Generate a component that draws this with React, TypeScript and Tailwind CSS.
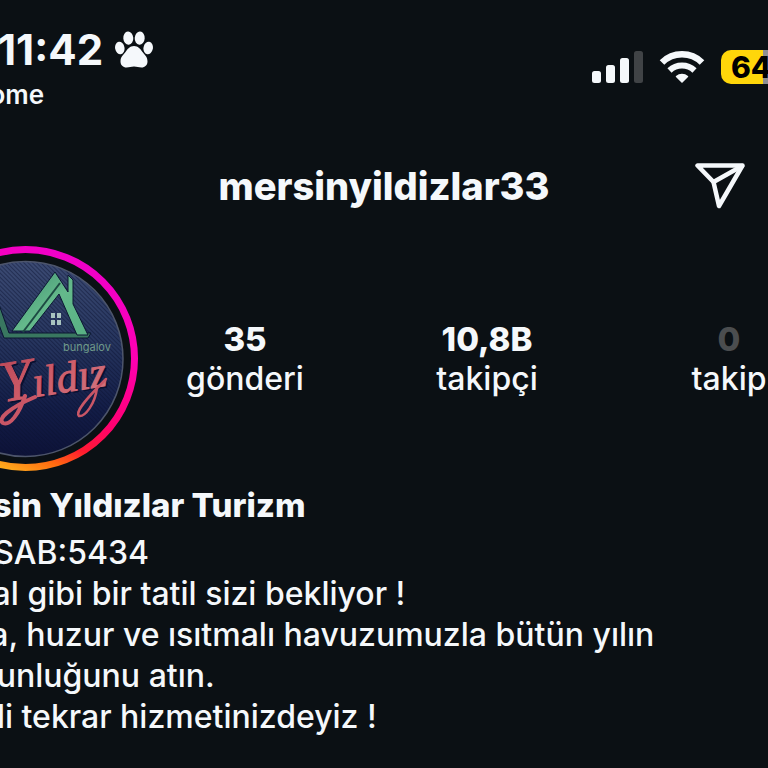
import type { ReactNode } from "react";

const STATS = [
  { value: "35", label: "gönderi", muted: false },
  { value: "10,8B", label: "takipçi", muted: false },
  { value: "0", label: "takip", muted: true },
];

const BIO = [
  "TÜRSAB:5434",
  "Masal gibi bir tatil sizi bekliyor !",
  "Doğa, huzur ve ısıtmalı havuzumuzla bütün yılın",
  "yorgunluğunu atın.",
  "Şimdi tekrar hizmetinizdeyiz !",
];

function PawIcon() {
  return (
    <svg width="38" height="38" viewBox="0 0 38 38" fill="currentColor" aria-hidden="true">
      <ellipse cx="4.8" cy="17" rx="4.7" ry="6.3" transform="rotate(-10 4.8 17)" />
      <ellipse cx="13.3" cy="7.2" rx="5" ry="6.600" transform="rotate(-4 13.3 7.2)" />
      <ellipse cx="24.7" cy="7.2" rx="5" ry="6.600" transform="rotate(4 24.7 7.2)" />
      <ellipse cx="33.2" cy="17" rx="4.7" ry="6.3" transform="rotate(10 33.2 17)" />
      <path d="M19 15c-4 0-6.500 3-8.500 6-2 3-5 4.500-5 9.500 0 3.500 2.600 6 6 6 3 0 4.500-1 7.500-1s4.500 1 7.500 1c3.400 0 6-2.500 6-6 0-5-3-6.500-5-9.500-2-3-4.500-6-8.500-6z" />
    </svg>
  );
}

function SignalIcon() {
  return (
    <svg width="51" height="33" viewBox="0 0 51 33" fill="currentColor" aria-label="Signal">
      <rect x="0" y="20" width="9" height="12" rx="2.5" />
      <rect x="14" y="14" width="9" height="18" rx="2.5" />
      <rect x="28" y="7" width="9" height="25" rx="2.5" />
      <rect x="42" y="0" width="9" height="32" rx="2.5" fill="#404346" />
    </svg>
  );
}

function WifiIcon() {
  return (
    <svg width="46" height="33" viewBox="0 0 46 33" fill="none" stroke="currentColor" aria-label="Wi-Fi">
      <path d="M3 11.500a28.500 28.500 0 0 1 40 0" strokeWidth="6.500" />
      <path d="M10.500 19.500a18 18 0 0 1 25 0" strokeWidth="6" />
      <path
        d="M17.500 25.500a8.500 8.500 0 0 1 11 0l-5.500 5.500z"
        fill="currentColor"
        strokeWidth="1.500"
        strokeLinejoin="round"
      />
    </svg>
  );
}

function SendIcon() {
  return (
    <svg
      width="50"
      height="48"
      viewBox="0 0 50 48"
      fill="none"
      stroke="currentColor"
      strokeWidth="4.500"
      strokeLinejoin="round"
      strokeLinecap="round"
      aria-hidden="true"
    >
      <path d="M2.500 3.500H47.500L24 44 18.500 20z" />
      <path d="M18.500 20L47 4" />
    </svg>
  );
}

/** Story ring with the bungalow logo inside. */
function Avatar() {
  return (
    <svg width="225" height="225" viewBox="0 0 225 225" className="block" role="img" aria-label="Yıldız bungalov">
      <defs>
        <linearGradient id="ring" gradientUnits="userSpaceOnUse" x1="190" y1="15" x2="100" y2="225">
          <stop offset="0" stopColor="#ee00cc" />
          <stop offset="0.35" stopColor="#ff00b0" />
          <stop offset="0.65" stopColor="#ff0070" />
          <stop offset="0.8" stopColor="#ff1a30" />
          <stop offset="0.9" stopColor="#ff6a10" />
          <stop offset="1" stopColor="#ffa81c" />
        </linearGradient>
        <linearGradient id="disc" x1="0" y1="0" x2="0" y2="1">
          <stop offset="0" stopColor="#3b4a72" />
          <stop offset="0.4" stopColor="#27365f" />
          <stop offset="0.75" stopColor="#131d47" />
          <stop offset="1" stopColor="#0d1238" />
        </linearGradient>
        <linearGradient id="roof" x1="0" y1="0" x2="1" y2="1">
          <stop offset="0" stopColor="#3f8f70" />
          <stop offset="0.5" stopColor="#64b98b" />
          <stop offset="1" stopColor="#58b084" />
        </linearGradient>
        <linearGradient id="script" x1="0" y1="0" x2="1" y2="1">
          <stop offset="0" stopColor="#b84555" />
          <stop offset="0.5" stopColor="#cf5c69" />
          <stop offset="1" stopColor="#cf7883" />
        </linearGradient>
        <pattern id="weave" width="3" height="3" patternUnits="userSpaceOnUse" patternTransform="rotate(-45)">
          <rect width="1" height="3" fill="#0a1230" opacity="0.45" />
        </pattern>
      </defs>
      <circle cx="112.500" cy="112.500" r="109" fill="none" stroke="url(#ring)" strokeWidth="7" />
      <circle cx="112.500" cy="113" r="97.500" fill="url(#disc)" />
      <circle cx="112.500" cy="113" r="97.500" fill="url(#weave)" stroke="#4d556b" strokeWidth="1.500" />

      <g stroke="#0c1733" strokeWidth="1">
        <path d="M82 47L96 87H178L175 92H91L76 52z" fill="#397760" />
        <path d="M142 26L99 85H117L146 48 164 89H175L160 58V34L155 29V46z" fill="url(#roof)" />
      </g>
      <path d="M147 37L110 86" stroke="#1d4a43" strokeWidth="2" />
      <g fill="#a9c4c0">
        <rect x="138" y="67" width="4" height="5" />
        <rect x="144" y="67" width="4" height="5" />
        <rect x="138" y="74" width="4" height="5" />
        <rect x="144" y="74" width="4" height="5" />
      </g>
      <text x="150" y="105" fontSize="11" fontFamily="Inter, sans-serif" fill="#6f9a8a">
        bungalov
      </text>
      <g transform="rotate(-9 90 150)" fontFamily="'Liberation Serif', serif" fontStyle="italic" fontSize="43">
        <text x="91" y="158" fill="#0a1030">
          <tspan fontSize="58">Y</tspan>ıldız
        </text>
        <text x="89" y="156" fill="url(#script)" stroke="url(#script)" strokeWidth="1">
          <tspan fontSize="58">Y</tspan>ıldız
        </text>
      </g>
      <g fill="none" stroke="#c95666" strokeLinecap="round">
        <path d="M112 150C106 168 97 180 90 177 84 173 96 162 122 151" strokeWidth="4" />
        <path d="M184 142C182 158 172 171 166 170 162 166 172 154 193 133" strokeWidth="2.500" />
      </g>
    </svg>
  );
}

function StatusBar() {
  return (
    <div className="flex justify-between pt-7 pr-[70px] pl-[85px]">
      <div>
        <div className="flex items-center gap-3">
          <span className="text-[42px] leading-[44px] font-bold">11:42</span>
          <PawIcon />
        </div>
        <a href="#home" className="-ml-7 block text-[26px] leading-[46px] font-semibold">
          Home
        </a>
      </div>
      <div className="flex h-[78px] items-center">
        <SignalIcon />
        <span className="ml-4">
          <WifiIcon />
        </span>
        <span className="ml-4 flex h-[34px] w-16 items-center rounded-[10px] bg-linear-to-r from-[#ffd60a] from-65% to-[#8e8e93] to-65% pl-[10px] text-[30px] font-extrabold text-black">
          64
        </span>
      </div>
    </div>
  );
}

function Stat({ value, label, muted }: { value: string; label: ReactNode; muted: boolean }) {
  return (
    <div className="flex flex-col items-center">
      <span
        className={
          muted ? "text-[33px] leading-10 font-extrabold text-[#4b4d4f]" : "text-[33px] leading-10 font-extrabold"
        }
      >
        {value}
      </span>
      <span className="text-[32px] leading-10 font-medium">{label}</span>
    </div>
  );
}

export default function App() {
  return (
    <div className="min-h-screen overflow-hidden bg-[#0b1014] font-['Inter','Liberation_Sans',sans-serif] text-[#f5f8fb]">
      <div className="-mx-[87px]">
        <StatusBar />

        <header className="mt-[30px] grid grid-cols-[1fr_auto_1fr] items-center pr-[110px] pl-[110px]">
          <h1 className="col-start-2 text-[38px] leading-[76px] font-extrabold">mersinyildizlar33</h1>
          <button type="button" aria-label="Paylaş" className="justify-self-end">
            <SendIcon />
          </button>
        </header>

        <section className="mt-[22px] flex items-center">
          <Avatar />
          <div className="grid flex-1 grid-cols-3 gap-7 pr-[19px]">
            {STATS.map((s) => (
              <Stat key={s.label} {...s} />
            ))}
          </div>
        </section>

        <section className="mt-[10px] pl-[15px]">
          <h2 className="mb-[3px] text-[33px] leading-[48px] font-extrabold">Mersin Yıldızlar Turizm</h2>
          {BIO.map((line) => (
            <p key={line} className="text-[32px] leading-[41px] font-medium whitespace-nowrap">
              {line}
            </p>
          ))}
        </section>
      </div>
    </div>
  );
}
